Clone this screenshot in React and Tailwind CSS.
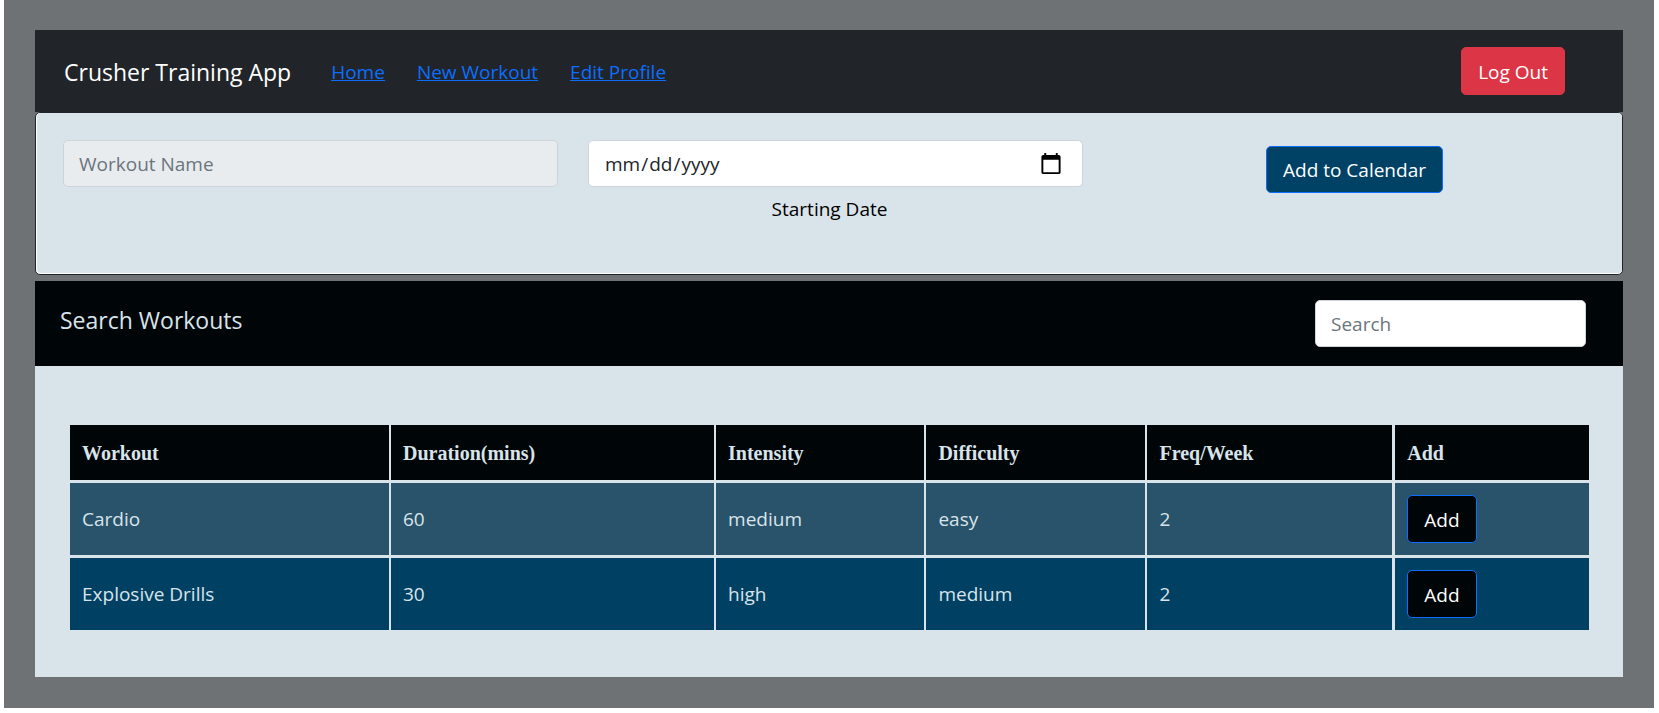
const columns = [
  { label: "Workout", width: "w-[21%]" },
  { label: "Duration(mins)", width: "w-[21.4%]" },
  { label: "Intensity", width: "w-[13.85%]" },
  { label: "Difficulty", width: "w-[14.55%]" },
  { label: "Freq/Week", width: "w-[16.25%]" },
  { label: "Add", width: "w-[12.95%]" },
];

const workouts = [
  { name: "Cardio", duration: 60, intensity: "medium", difficulty: "easy", frequency: 2 },
  { name: "Explosive Drills", duration: 30, intensity: "high", difficulty: "medium", frequency: 2 },
];

const field =
  "block h-[47px] w-full rounded-[5px] border border-[#ced4da] px-[15px] text-[#212529] placeholder:text-[#6c757d] placeholder:opacity-100";
const cell = "border-l-2 border-t-3 border-[#d9e4ea] px-3 first:border-l-0 last:border-l-3";
const button = "rounded-[5px] border px-4 pt-px text-white";

function Header() {
  return (
    <header className="flex h-[82px] items-center bg-[#212529] pl-[29px] pr-[58px]">
      <h1 className="pt-px text-[23px] text-white">Crusher Training App</h1>
      <nav className="ml-10 flex flex-1 gap-8 pt-px text-[#0d6efd] underline">
        <a href="#home">Home</a>
        <a href="#new-workout">New Workout</a>
        <a href="#edit-profile">Edit Profile</a>
      </nav>
      <button type="button" className={`${button} h-12 border-[#dc3545] bg-[#dc3545]`}>
        Log Out
      </button>
    </header>
  );
}

function CalendarForm() {
  return (
    <section className="rounded-[5px] border border-[#212529] bg-white pb-px pl-px">
      <form className="grid h-[160px] grid-cols-[495fr_495fr_483fr] items-start gap-[30px] rounded-[4px] bg-[#d9e4ea] px-[26px] pt-[27px]">
        <input aria-label="Workout Name" placeholder="Workout Name" disabled className={`${field} bg-[#e9ecef]`} />
        <div>
          <input
            id="start"
            type="date"
            className={`${field} bg-white [&::-webkit-calendar-picker-indicator]:size-6 [&::-webkit-calendar-picker-indicator]:mr-[2px]`}
          />
          <label htmlFor="start" className="mt-[7px] block pr-3 text-center text-black">
            Starting Date
          </label>
        </div>
        <button
          type="button"
          className={`${button} mt-[6px] h-[47px] justify-self-center border-[#0d6efd] bg-[#004266]`}
        >
          Add to Calendar
        </button>
      </form>
    </section>
  );
}

function Workouts() {
  return (
    <section className="mt-[6px] bg-[#d9e4ea]">
      <div className="flex h-[85px] items-start justify-between bg-[#000508] pl-[25px] pr-[37px] pt-[19px]">
        <h2 className="pt-[5px] text-[23px] leading-[30px] text-[#d9e4ea]">Search Workouts</h2>
        <div className="w-[271px]">
          <input type="search" aria-label="Search" placeholder="Search" className={`${field} bg-white`} />
        </div>
      </div>
      <div className="pb-[47px] pl-[35px] pr-[34px] pt-[59px]">
        <table className="w-full table-fixed border-separate border-spacing-0 text-left text-[#d9e4ea]">
          <thead>
            <tr className="h-[55px] bg-[#000508] font-['Liberation_Serif',serif] text-[20px]">
              {columns.map((column) => (
                <th
                  key={column.label}
                  className={`${column.width} border-l-2 border-[#d9e4ea] px-3 pt-px font-bold first:border-l-0 last:border-l-3`}
                >
                  {column.label}
                </th>
              ))}
            </tr>
          </thead>
          <tbody>
            {workouts.map((workout) => (
              <tr key={workout.name} className="h-[75px] odd:bg-[#28536b] even:bg-[#004063]">
                <td className={cell}>{workout.name}</td>
                <td className={cell}>{workout.duration}</td>
                <td className={cell}>{workout.intensity}</td>
                <td className={cell}>{workout.difficulty}</td>
                <td className={cell}>{workout.frequency}</td>
                <td className={cell}>
                  <button
                    type="button"
                    aria-label={`Add ${workout.name}`}
                    className={`${button} block h-12 border-[#0d6efd] bg-[#000508]`}
                  >
                    Add
                  </button>
                </td>
              </tr>
            ))}
          </tbody>
        </table>
      </div>
    </section>
  );
}

export default function App() {
  return (
    <div className="bg-white pl-1 pr-[5px] font-['Open_Sans',sans-serif] text-[19px] leading-[30px]">
      <main className="bg-[#6e7275] px-[31px] pb-[31px] pt-[30px]">
        <Header />
        <CalendarForm />
        <Workouts />
      </main>
    </div>
  );
}
